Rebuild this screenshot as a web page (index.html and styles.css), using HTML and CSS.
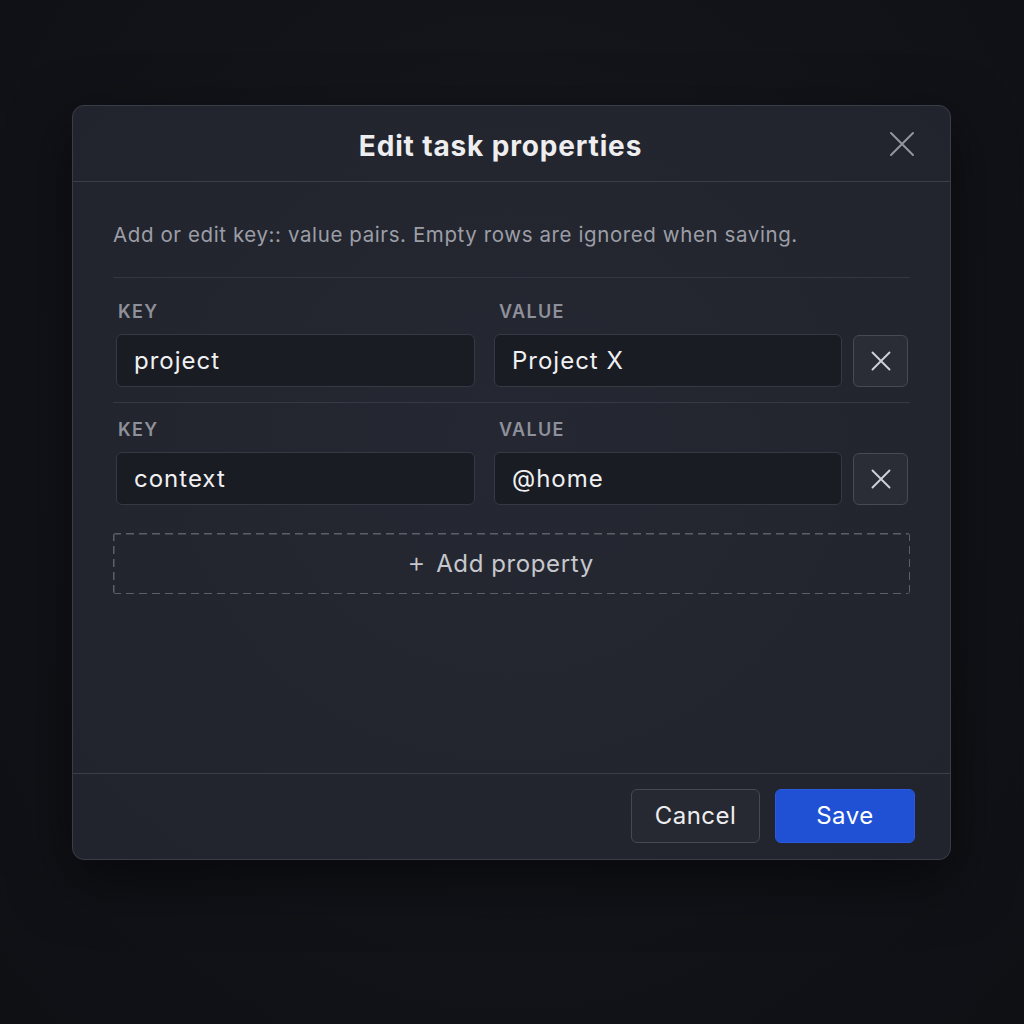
FILE: index.html
```html
<!DOCTYPE html>
<html lang="en">
<head>
<meta charset="utf-8">
<title>Edit task properties</title>
<link rel="stylesheet" href="styles.css">
</head>
<body>
<div class="stage">
  <div class="modal">
    <div class="header">
      <h1 class="title">Edit task properties</h1>
      <button class="close" aria-label="Close">
        <svg width="26" height="26" viewBox="0 0 26 26"><path d="M2 2L24 24M24 2L2 24" stroke="currentColor" stroke-width="2" stroke-linecap="round"/></svg>
      </button>
    </div>
    <div class="body">
      <p class="desc">Add or edit key:: value pairs. Empty rows are ignored when saving.</p>
      <div class="rows">
        <div class="row">
          <div class="label">KEY</div>
          <div class="label value-label">VALUE</div>
          <div></div>
          <div class="input">project</div>
          <div class="input">Project X</div>
          <button class="remove" aria-label="Remove">
            <svg width="20" height="20" viewBox="0 0 20 20"><path d="M1.5 1.5L18.5 18.5M18.5 1.5L1.5 18.5" stroke="currentColor" stroke-width="1.9" stroke-linecap="round"/></svg>
          </button>
        </div>
        <div class="row">
          <div class="label">KEY</div>
          <div class="label value-label">VALUE</div>
          <div></div>
          <div class="input">context</div>
          <div class="input">@home</div>
          <button class="remove" aria-label="Remove">
            <svg width="20" height="20" viewBox="0 0 20 20"><path d="M1.5 1.5L18.5 18.5M18.5 1.5L1.5 18.5" stroke="currentColor" stroke-width="1.9" stroke-linecap="round"/></svg>
          </button>
        </div>
      </div>
      <button class="add"><span class="plus">+</span><span>Add property</span></button>
    </div>
    <div class="footer">
      <button class="btn cancel">Cancel</button>
      <button class="btn save">Save</button>
    </div>
  </div>
</div>
</body>
</html>
```

FILE: styles.css
```css
* { box-sizing: border-box; }
html, body { margin: 0; padding: 0; }
body {
  width: 1024px;
  height: 1024px;
  background: radial-gradient(ellipse at 50% 40%, #16181e 0%, #111318 60%, #0e1014 100%);
  font-family: Inter, "Noto Sans", sans-serif;
  overflow: hidden;
}
.stage {
  padding: 105px 0 0 72px;
}
.modal {
  width: 879px;
  height: 755px;
  background: radial-gradient(ellipse at 50% 45%, #252832 0%, #22252d 70%, #21242c 100%);
  border: 1px solid #3a3d47;
  border-radius: 12px;
  box-shadow: 0 20px 60px rgba(0,0,0,0.55);
  display: flex;
  flex-direction: column;
}
.header {
  height: 76px;
  border-bottom: 1px solid #3b3e48;
  display: flex;
  align-items: center;
  justify-content: center;
  padding-right: 22px;
  position: relative;
}
.title {
  margin: 0;
  font-size: 28px;
  font-weight: 700;
  color: #eeeef1;
  letter-spacing: 0.85px;
  padding-top: 5px;
}
.close {
  position: absolute;
  right: 35px;
  top: 25px;
  width: 26px;
  height: 26px;
  padding: 0;
  border: 0;
  background: none;
  color: #92959d;
  display: flex;
}
.body {
  flex: 1;
  padding: 39px 40px 0 40px;
}
.desc {
  margin: 0;
  font-size: 20.5px;
  line-height: 28px;
  letter-spacing: 0.6px;
  color: #9c9ea7;
  padding-bottom: 28px;
  border-bottom: 1px solid #343741;
}
.rows {
  padding-top: 7px;
}
.row {
  display: grid;
  grid-template-columns: 359px 348px 55px;
  column-gap: 19px;
  row-gap: 11px;
  padding: 16px 1px 15px 3px;
  border-bottom: 1px solid #363943;
}
.row .remove { margin-left: -8px; }
.row:last-child { border-bottom: 0; }
.label {
  font-size: 18px;
  line-height: 22px;
  font-weight: 600;
  color: #8e919b;
  letter-spacing: 1.3px;
  padding-left: 2px;
}
.value-label { padding-left: 5px; }
.input {
  height: 53px;
  background: #1a1c23;
  border: 1px solid #363943;
  border-radius: 6px;
  padding: 0 17px;
  display: flex;
  align-items: center;
  font-size: 24px;
  letter-spacing: 1px;
  color: #f0f0f2;
}
.remove {
  width: 55px;
  height: 52px;
  margin-top: 0.5px;
  background: #2a2d36;
  border: 1px solid #474a54;
  border-radius: 6px;
  color: #cfd1d7;
  display: flex;
  align-items: center;
  justify-content: center;
  padding: 0;
}
.add {
  margin-top: 13px;
  width: 100%;
  height: 61px;
  border: 0;
  border-radius: 3px;
  background:
    repeating-linear-gradient(90deg, #5c5f68 0 8px, transparent 8px 13px) left top / 100% 1.5px no-repeat,
    repeating-linear-gradient(90deg, #5c5f68 0 8px, transparent 8px 13px) left bottom / 100% 1.5px no-repeat,
    repeating-linear-gradient(180deg, #5c5f68 0 8px, transparent 8px 13px) left top / 1.5px 100% no-repeat,
    repeating-linear-gradient(180deg, #5c5f68 0 8px, transparent 8px 13px) right top / 1.5px 100% no-repeat;
  color: #c6c8ce;
  font-family: inherit;
  font-size: 24px;
  letter-spacing: 0.6px;
  display: flex;
  align-items: center;
  justify-content: center;
  gap: 10px;
  padding: 0 22px 0 0;
}
.plus { font-size: 28px; font-weight: 300; margin-top: -3px; }
.footer {
  height: 86px;
  border-top: 1px solid #3b3e48;
  display: flex;
  justify-content: flex-end;
  align-items: flex-start;
  gap: 15px;
  padding: 15px 35px 0 0;
}
.btn {
  height: 54px;
  border-radius: 6px;
  font-family: inherit;
  font-size: 24px;
  letter-spacing: 0.5px;
  padding: 0 0 2px 0;
}
.cancel {
  width: 129px;
  background: #262931;
  border: 1px solid #464953;
  color: #ededf0;
}
.save {
  width: 140px;
  background: #2051d4;
  border: 1px solid #2a5ae0;
  color: #ffffff;
}
```
